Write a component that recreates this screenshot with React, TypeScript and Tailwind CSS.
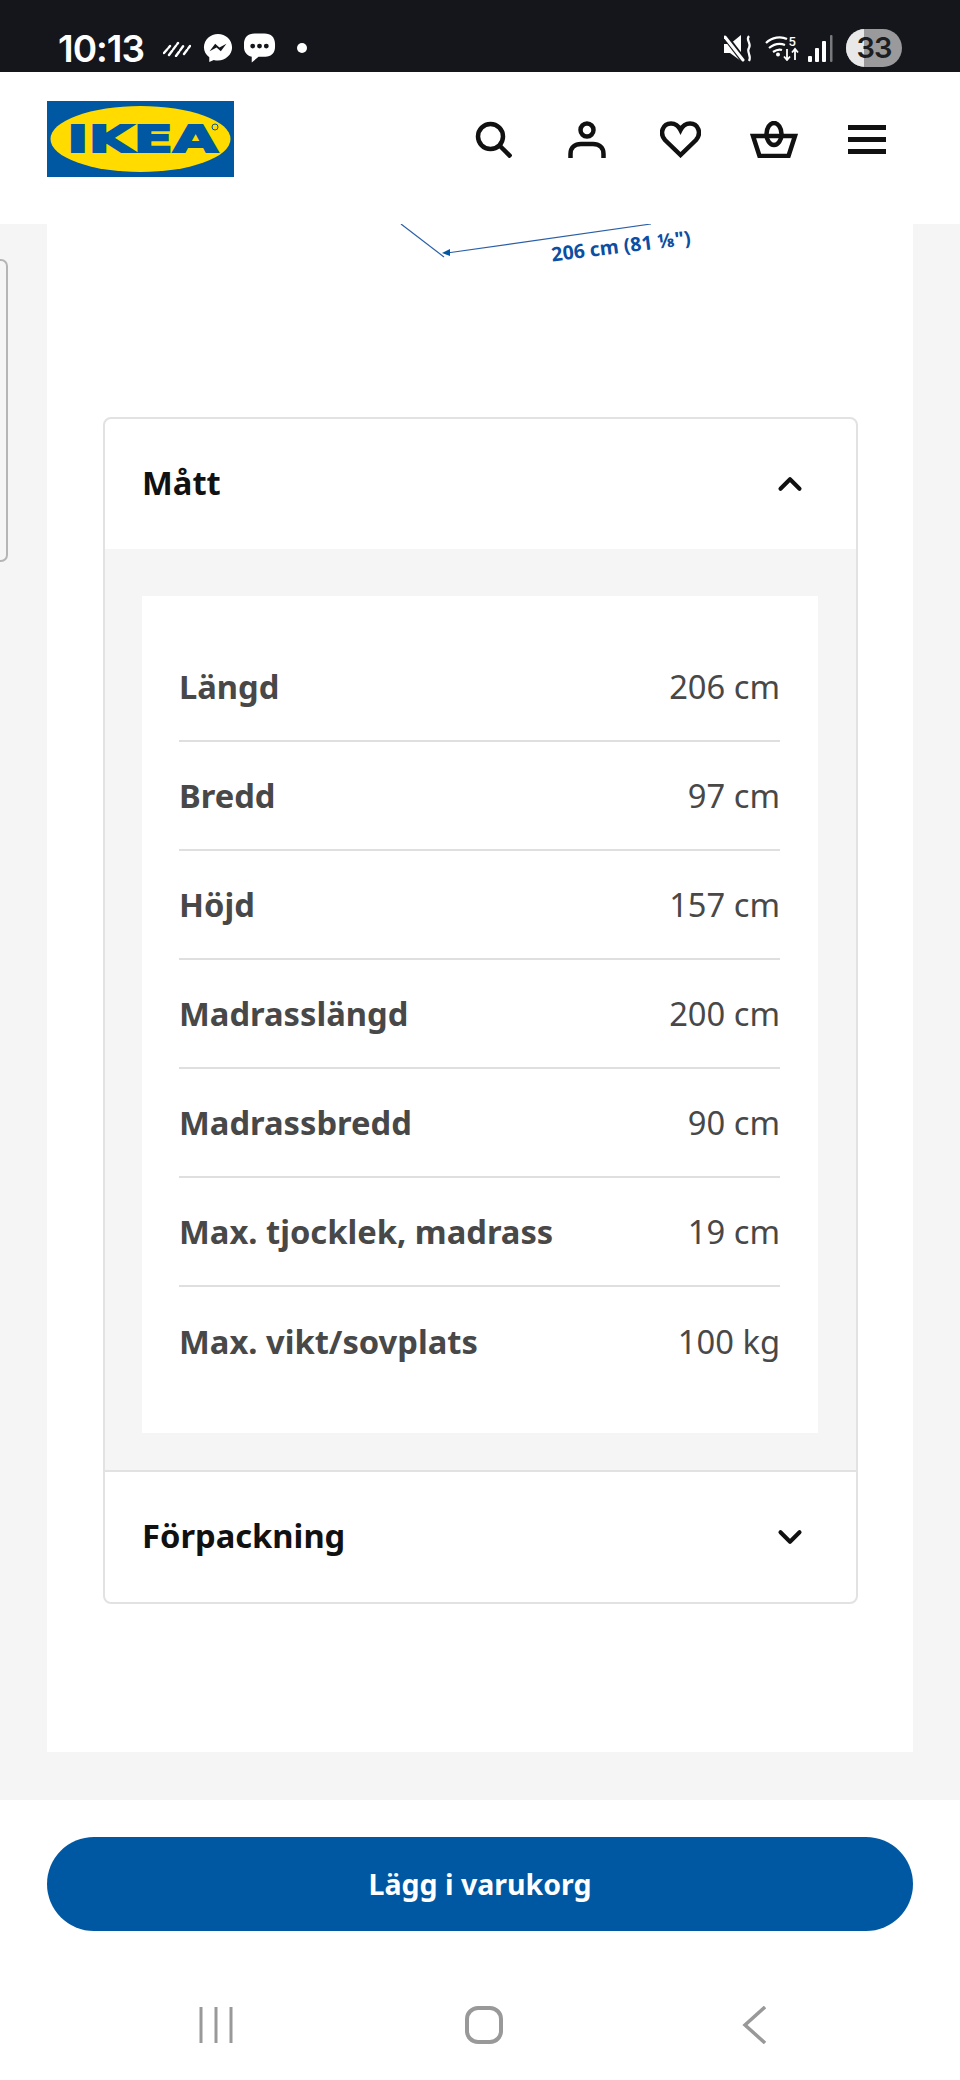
import React from "react";
import { ChevronDown, ChevronUp } from "lucide-react";

const rows = [
  ["Längd", "206 cm"],
  ["Bredd", "97 cm"],
  ["Höjd", "157 cm"],
  ["Madrasslängd", "200 cm"],
  ["Madrassbredd", "90 cm"],
  ["Max. tjocklek, madrass", "19 cm"],
  ["Max. vikt/sovplats", "100 kg"],
];

const StatusBar = () => (
  <div className="h-[72px] bg-[#14161b] flex items-center pl-[58px] pr-[58px] pt-[24px] text-white">
    <span className="text-[37px] leading-none font-semibold font-['Inter',sans-serif] tracking-[-1px] w-[86px] whitespace-nowrap">10:13</span>
    <svg width="28" height="18" viewBox="0 0 28 18" stroke="white" strokeWidth="2.400" strokeLinecap="round" className="ml-[19px]">
      <path d="M1 14L7 7M6 16L15 4M13 17L21 6M21 15L27 7" strokeDasharray="5 2" />
    </svg>
    <svg width="30" height="30" viewBox="0 0 32 32" className="ml-[12px]">
      <path d="M16 1C8 1 1 7 1 15.500C1 19.600 3.300 23.500 6.700 25.900V31L11.500 28.700C12.900 29.100 14.400 29.300 16 29.300C24 29.300 31 23 31 15.500C31 7 24 1 16 1Z" fill="white" />
      <path d="M7 19.500L13 11.500L17.500 15.500L25 11.500L19 19.500L14.500 15.500Z" fill="#14161b" />
    </svg>
    <svg width="33" height="32" viewBox="0 0 34 32" className="ml-[10px]">
      <path d="M12 1H22C29 1 33 5 33 12V15C33 21 29 25 23 25H16L9 31V25C4 24 1 20 1 15V12C1 5 5 1 12 1Z" fill="white" />
      <circle cx="10" cy="14" r="2.500" fill="#14161b" />
      <circle cx="17" cy="14" r="2.500" fill="#14161b" />
      <circle cx="24" cy="14" r="2.500" fill="#14161b" />
    </svg>
    <span className="w-[10px] h-[10px] rounded-full bg-white ml-[21px]" />
    <div className="ml-auto flex items-center">
      <svg width="28" height="27" viewBox="0 0 28 27" className="mr-[13px]">
        <path d="M0 9H6L17 0V26L6 18H0Z" fill="white" />
        <path d="M1 1L20 26" stroke="#14161b" strokeWidth="6" />
        <path d="M1 2L19 25" stroke="white" strokeWidth="3" strokeLinecap="round" />
        <path d="M25 1C21 5 28 8 25 13C22 17 28 20 25 26" stroke="white" strokeWidth="2.200" fill="none" />
      </svg>
      <svg width="35" height="26" viewBox="0 0 35 26" fill="none" className="mr-[8px]">
        <path d="M1 8C7 2 16 1 22 4M4 13C9 9 15 8 20 10M8 17C11 15 14 14 17 15" stroke="white" strokeWidth="2.200" />
        <circle cx="13" cy="19.500" r="2" fill="white" />
        <path d="M22 14V25M19 21.500L22 25L25 21.500M30 25V14M27 17.500L30 14L33 17.500" stroke="white" strokeWidth="1.800" />
        <text x="23.500" y="11" fill="white" fontSize="13" fontFamily="Roboto, sans-serif" fontWeight="500">5</text>
      </svg>
      <svg width="25" height="27" viewBox="0 0 25 27" className="mr-[13px]">
        <rect x="0" y="21" width="4" height="6" rx="1" fill="white" />
        <rect x="7" y="13" width="4" height="14" rx="1" fill="white" />
        <rect x="14" y="6" width="4" height="21" rx="1" fill="white" />
        <rect x="22" y="0" width="2.500" height="27" rx="1" fill="#77797c" />
      </svg>
      <div className="w-[56px] h-[38px] rounded-full overflow-hidden relative flex bg-[#9a9a9c]">
        <div className="w-[18px] bg-[#e8e8e9]" />
        <span className="absolute inset-0 flex items-center justify-center text-[#1c1d20] text-[29px] font-semibold font-['Inter',sans-serif] tracking-[-1px]">33</span>
      </div>
    </div>
  </div>
);

const Header = () => (
  <div className="h-[152px] bg-white flex items-start pl-[47px] pr-[74px] pt-[29px]">
    <svg width="187" height="76" viewBox="0 0 187 76">
      <rect width="187" height="76" fill="#0058a3" />
      <ellipse cx="93.500" cy="38" rx="90" ry="33" fill="#ffdb00" />
      <text x="20" y="51" fill="#0058a3" stroke="#0058a3" strokeWidth="1.800" fontSize="37" fontWeight="700" fontFamily="'DejaVu Sans', sans-serif" textLength="151" lengthAdjust="spacingAndGlyphs">IKEA</text>
      <circle cx="168" cy="26" r="3" fill="none" stroke="#0058a3" strokeWidth="1" />
    </svg>
    <div className="ml-auto flex items-start mt-[20px]">
      <svg width="37" height="37" viewBox="0 0 37 37" fill="none" stroke="#111" strokeWidth="4.500">
        <circle cx="15.500" cy="15.500" r="12.500" />
        <path d="M24 24L36 36" />
      </svg>
      <svg width="38" height="37" viewBox="0 0 38 37" fill="none" stroke="#111" strokeWidth="4.500" className="ml-[56px]">
        <circle cx="19" cy="9" r="6.500" />
        <path d="M2.500 37V33C2.500 26 7 23 13 23H25C31 23 35.500 26 35.500 33V37" />
      </svg>
      <svg width="41" height="37" viewBox="0 0 41 37" fill="none" stroke="#111" strokeWidth="4.500" className="ml-[54px]">
        <path d="M20.500 34L5 19C-1 12 3 2.500 11 2.500C16 2.500 19 6 20.500 9C22 6 25 2.500 30 2.500C38 2.500 42 12 36 19Z" />
      </svg>
      <svg width="48" height="37" viewBox="0 0 48 37" fill="none" stroke="#111" strokeWidth="4.500" className="ml-[49px]">
        <path d="M3 15H45L38.500 35H9.500Z" />
        <ellipse cx="24" cy="13" rx="7.500" ry="11" />
      </svg>
      <svg width="38" height="30" viewBox="0 0 38 30" fill="#111" className="ml-[50px] mt-[4px]">
        <rect width="38" height="5" />
        <rect y="12" width="38" height="5" />
        <rect y="24" width="38" height="5" />
      </svg>
    </div>
  </div>
);

const Dimension = () => (
  <div className="h-[193px] relative">
    <svg width="320" height="60" viewBox="0 0 320 60" fill="none" className="absolute left-[350px] top-0">
      <path d="M4 0L47 33" stroke="#2a5fa8" strokeWidth="1.200" />
      <path d="M50 29L254 0" stroke="#2a5fa8" strokeWidth="1.200" />
      <path d="M45 29L53 25L53 32Z" fill="#0058a3" />
    </svg>
    <span className="absolute left-[504px] top-[10px] text-[#0b4ea2] text-[19.500px] leading-[24px] font-bold -rotate-[7deg] whitespace-nowrap">206 cm (81 ⅛")</span>
  </div>
);

const SpecRow = ({ label, value, last }: { label: string; value: string; last: boolean }) => (
  <div className={`h-[109px] flex items-center justify-between ${last ? "" : "border-b-2 border-[#dfdfdf]"}`}>
    <span className="font-bold">{label}</span>
    <span>{value}</span>
  </div>
);

export default function App() {
  return (
    <div className="w-[960px] h-[2080px] flex flex-col bg-white font-['Noto_Sans',sans-serif] overflow-hidden">
      <StatusBar />
      <Header />
      <div className="relative h-[1576px] bg-[#f5f5f5] px-[47px] pb-[48px]">
        <div className="absolute left-[-6px] top-[35px] w-[14px] h-[303px] border-2 border-[#b5b5b5] rounded-[8px]" />
        <div className="bg-white h-full">
          <Dimension />
          <div className="ml-[56px] mr-[55px] border-2 border-[#e2e2e2] rounded-[8px] overflow-hidden">
            <div className="h-[130px] flex items-center justify-between pl-[37px] pr-[47px]">
              <span className="text-[32.700px] font-bold text-[#111] pb-[2px]">Mått</span>
              <ChevronUp className="w-[38px] h-[38px] text-[#111]" strokeWidth={2.600} />
            </div>
            <div className="bg-[#f5f5f5] pl-[37px] pr-[38px] pt-[47px] pb-[37px] border-b-2 border-[#e2e2e2]">
              <div className="bg-white pl-[37px] pr-[38px] py-[37px] text-[32.700px] text-[#484848]">
                {rows.map(([label, value], i) => (
                  <SpecRow key={label} label={label} value={value} last={i === rows.length - 1} />
                ))}
              </div>
            </div>
            <div className="h-[130px] flex items-center justify-between pl-[37px] pr-[47px]">
              <span className="text-[32.700px] font-bold text-[#111] pb-[3px]">Förpackning</span>
              <ChevronDown className="w-[38px] h-[38px] text-[#111]" strokeWidth={2.600} />
            </div>
          </div>
        </div>
      </div>
      <div className="h-[280px] bg-white px-[47px] pt-[37px]">
        <div className="h-[94px] rounded-full bg-[#0058a3] flex items-center justify-center text-white text-[28.500px] font-bold">
          Lägg i varukorg
        </div>
        <div className="mt-[75px] flex items-center pl-[152px]">
          <svg width="34" height="38" viewBox="0 0 34 38" stroke="#999" strokeWidth="3">
            <path d="M2 1V37M17 1V37M32 1V37" />
          </svg>
          <svg width="38" height="38" viewBox="0 0 38 38" fill="none" stroke="#999" strokeWidth="4" className="ml-[232px]">
            <rect x="2" y="2" width="34" height="34" rx="11" />
          </svg>
          <svg width="24" height="38" viewBox="0 0 24 38" fill="none" stroke="#999" strokeWidth="3.500" className="ml-[239px]">
            <path d="M23 1L3 19L23 37" />
          </svg>
        </div>
      </div>
    </div>
  );
}
